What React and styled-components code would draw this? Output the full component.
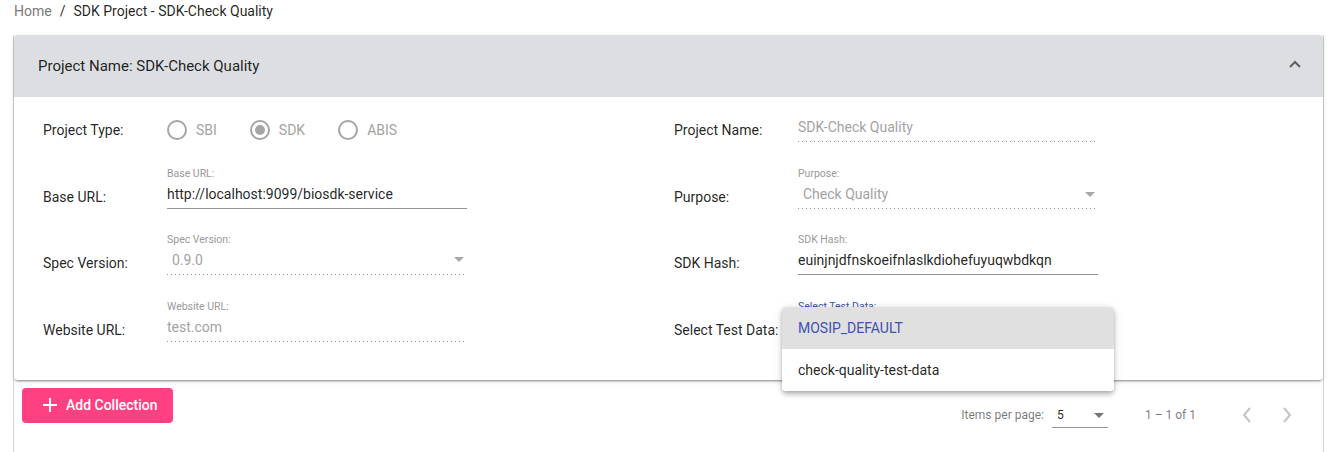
import React from "react";
import styled, { createGlobalStyle } from "styled-components";

const Global = createGlobalStyle`
  html, body { margin: 0; padding: 0; overflow: hidden; background: #fff; }
  body { font-family: Roboto, "Noto Sans", "Liberation Sans", sans-serif; color: rgba(0,0,0,.87); }
  * { box-sizing: border-box; }
`;

const Page = styled.div`
  width: 1338px;
  height: 452px;
`;

const Breadcrumb = styled.nav`
  display: flex;
  align-items: center;
  gap: 8px;
  height: 22px;
  padding: 0 0 0 14px;
  font-size: 14px;
  line-height: 20px;
  margin-bottom: 13px;
`;

const Crumb = styled.span`
  color: ${(p) => (p.$muted ? "#7a7a7a" : "rgba(0,0,0,.87)")};
`;

const Card = styled.div`
  margin: 0 14px 0 13px;
  border-left: 1px solid #d4d4d4;
  border-right: 1px solid #d4d4d4;
  height: 420px;
`;

const Panel = styled.section`
  position: relative;
  border-radius: 4px;
  background: #fff;
  box-shadow: 0 3px 1px -2px rgba(0,0,0,.2), 0 2px 2px 0 rgba(0,0,0,.14), 0 1px 5px 0 rgba(0,0,0,.12);
`;

const PanelHeader = styled.header`
  display: flex;
  align-items: center;
  justify-content: space-between;
  height: 62px;
  padding: 0 22px 0 24px;
  background: #dcdee2;
  border-radius: 4px 4px 0 0;
  font-size: 15px;
  color: rgba(0,0,0,.87);
`;

const Chevron = styled.svg`
  width: 12px;
  height: 8px;
  margin-bottom: 5px;
`;

const PanelBody = styled.div`
  display: grid;
  grid-template-columns: 631px 1fr;
  grid-auto-rows: 66.67px;
  padding: 8px 18px 8.33px 29px;
`;

const FieldRow = styled.div`
  display: flex;
  align-items: flex-end;
  padding-bottom: ${(p) => p.$pb || 30}px;
`;

const RowLabel = styled.div`
  width: 124px;
  flex: none;
  font-size: 14px;
  line-height: 20px;
  margin-bottom: 2px;
  color: rgba(0,0,0,.87);
`;

const RadioGroup = styled.div`
  display: flex;
  align-items: center;
  gap: 33px;
  margin-bottom: 2px;
`;

const RadioItem = styled.label`
  display: flex;
  align-items: center;
  gap: 9px;
  font-size: 14px;
  line-height: 20px;
  color: #a3a3a3;
`;

const RadioCircle = styled.span`
  width: 20px;
  height: 20px;
  border-radius: 50%;
  border: 2px solid #a5a5a5;
  display: flex;
  align-items: center;
  justify-content: center;
  &::after {
    content: "";
    width: 10px;
    height: 10px;
    border-radius: 50%;
    background: ${(p) => (p.$checked ? "#a5a5a5" : "transparent")};
  }
`;

const Field = styled.div`
  position: relative;
  width: 300px;
  display: flex;
  flex-direction: column;
`;

const FloatLabel = styled.div`
  font-size: 10.5px;
  line-height: 14px;
  height: 14px;
  margin-bottom: 3px;
  color: ${(p) => (p.$focused ? "#3f51b5" : "#9a9a9a")};
  white-space: nowrap;
  overflow: hidden;
`;

const Infix = styled.div`
  display: flex;
  align-items: center;
  justify-content: space-between;
  height: 24px;
  padding: 0 ${(p) => (p.$select ? "3px" : "0")} 4px ${(p) => (p.$select ? "5px" : "0")};
`;

const Value = styled.span`
  font-size: 14px;
  line-height: 20px;
  color: ${(p) => (p.$disabled ? "#a3a3a3" : "rgba(0,0,0,.87)")};
  white-space: nowrap;
`;

const Arrow = styled.span`
  width: 0;
  height: 0;
  border-left: 5px solid transparent;
  border-right: 5px solid transparent;
  border-top: 5px solid ${(p) => (p.$dark ? "rgba(0,0,0,.54)" : "#a8a8a8")};
`;

const Underline = styled.div`
  height: 1px;
  ${(p) =>
    p.$dotted
      ? `background-image: linear-gradient(to right, rgba(0,0,0,.42) 0%, rgba(0,0,0,.42) 33%, transparent 0%);
         background-size: 4px 1px;
         background-repeat: repeat-x;`
      : `background: #949494;`}
`;

const Overlay = styled.div`
  position: absolute;
  left: -16px;
  top: 7.33px;
  width: 332px;
  z-index: 10;
  background: #fff;
  border-radius: 4px;
  overflow: hidden;
  box-shadow: 0 2px 4px -1px rgba(0,0,0,.2), 0 4px 5px 0 rgba(0,0,0,.14), 0 1px 10px 0 rgba(0,0,0,.12);
`;

const Option = styled.div`
  height: 42px;
  display: flex;
  align-items: center;
  padding: 0 16px;
  font-size: 14px;
  background: ${(p) => (p.$active ? "#e0e0e0" : "#fff")};
  color: ${(p) => (p.$active ? "#3f51b5" : "rgba(0,0,0,.87)")};
`;

const Footer = styled.div`
  display: flex;
  align-items: flex-start;
  justify-content: space-between;
  padding: 0 16px 0 8px;
`;

const AddButton = styled.button`
  margin-top: 8px;
  height: 35px;
  display: flex;
  align-items: center;
  gap: 9px;
  padding: 0 15px 0 21px;
  border: none;
  border-radius: 4px;
  background: #ff4081;
  color: #fff;
  font-family: inherit;
  font-size: 14px;
  font-weight: 500;
`;

const Paginator = styled.div`
  margin-top: 7px;
  height: 56px;
  display: flex;
  align-items: center;
  font-size: 12px;
  color: rgba(0,0,0,.54);
`;

const PageSizeLabel = styled.span`
  margin-right: 8px;
`;

const PageSizeSelect = styled.div`
  width: 56px;
  display: flex;
  flex-direction: column;
  margin-top: 4px;
`;

const PageSizeInfix = styled.div`
  display: flex;
  align-items: center;
  justify-content: space-between;
  padding: 0 4px 2px 5px;
  height: 22px;
  font-size: 12px;
  color: rgba(0,0,0,.87);
`;

const RangeLabel = styled.span`
  margin: 0 31px 0 37px;
`;

const NavButton = styled.button`
  width: 40px;
  height: 40px;
  border: none;
  background: transparent;
  display: flex;
  align-items: center;
  justify-content: center;
  padding: 0;
`;

function TextField({ label, value, disabled, select, dotted, focused, children }) {
  return (
    <Field>
      {label && <FloatLabel $focused={focused}>{label}</FloatLabel>}
      <Infix $select={select}>
        <Value $disabled={disabled}>{value}</Value>
        {select && <Arrow />}
      </Infix>
      <Underline $dotted={dotted} />
      {children}
    </Field>
  );
}

function Radio({ label, checked }) {
  return (
    <RadioItem>
      <RadioCircle $checked={checked} />
      {label}
    </RadioItem>
  );
}

const NavIcon = ({ dir }) => (
  <svg width="10" height="16" viewBox="0 0 10 16">
    <path
      d={dir === "prev" ? "M8 1 L2 8 L8 15" : "M2 1 L8 8 L2 15"}
      fill="none"
      stroke="#c4c4c4"
      strokeWidth="2"
    />
  </svg>
);

export default function App() {
  return (
    <Page>
      <Global />
      <Breadcrumb>
        <Crumb $muted>Home</Crumb>
        <Crumb>/</Crumb>
        <Crumb>SDK Project - SDK-Check Quality</Crumb>
      </Breadcrumb>
      <Card>
        <Panel>
          <PanelHeader>
            <span>Project Name: SDK-Check Quality</span>
            <Chevron viewBox="0 0 12 8">
              <path d="M1 7 L6 2 L11 7" fill="none" stroke="#5f5f5f" strokeWidth="2" />
            </Chevron>
          </PanelHeader>
          <PanelBody>
            <FieldRow>
              <RowLabel>Project Type:</RowLabel>
              <RadioGroup>
                <Radio label="SBI" />
                <Radio label="SDK" checked />
                <Radio label="ABIS" />
              </RadioGroup>
            </FieldRow>
            <FieldRow>
              <RowLabel>Project Name:</RowLabel>
              <TextField value="SDK-Check Quality" disabled dotted />
            </FieldRow>

            <FieldRow $pb={29}>
              <RowLabel>Base URL:</RowLabel>
              <TextField label="Base URL:" value="http://localhost:9099/biosdk-service" />
            </FieldRow>
            <FieldRow $pb={29}>
              <RowLabel>Purpose:</RowLabel>
              <TextField label="Purpose:" value="Check Quality" disabled dotted select />
            </FieldRow>

            <FieldRow>
              <RowLabel>Spec Version:</RowLabel>
              <TextField label="Spec Version:" value="0.9.0" disabled dotted select />
            </FieldRow>
            <FieldRow>
              <RowLabel>SDK Hash:</RowLabel>
              <TextField label="SDK Hash:" value="euinjnjdfnskoeifnlaslkdiohefuyuqwbdkqn" />
            </FieldRow>

            <FieldRow>
              <RowLabel>Website URL:</RowLabel>
              <TextField label="Website URL:" value="test.com" disabled dotted />
            </FieldRow>
            <FieldRow>
              <RowLabel>Select Test Data:</RowLabel>
              <TextField label="Select Test Data:" value="" focused select>
                <Overlay>
                  <Option $active>MOSIP_DEFAULT</Option>
                  <Option>check-quality-test-data</Option>
                </Overlay>
              </TextField>
            </FieldRow>
          </PanelBody>
        </Panel>
        <Footer>
          <AddButton>
            <svg width="14" height="14" viewBox="0 0 14 14">
              <path d="M7 0 V14 M0 7 H14" stroke="#fff" strokeWidth="2" />
            </svg>
            Add Collection
          </AddButton>
          <Paginator>
            <PageSizeLabel>Items per page:</PageSizeLabel>
            <PageSizeSelect>
              <PageSizeInfix>
                <span>5</span>
                <Arrow $dark />
              </PageSizeInfix>
              <Underline />
            </PageSizeSelect>
            <RangeLabel>1 – 1 of 1</RangeLabel>
            <NavButton aria-label="Previous page">
              <NavIcon dir="prev" />
            </NavButton>
            <NavButton aria-label="Next page">
              <NavIcon dir="next" />
            </NavButton>
          </Paginator>
        </Footer>
      </Card>
    </Page>
  );
}
